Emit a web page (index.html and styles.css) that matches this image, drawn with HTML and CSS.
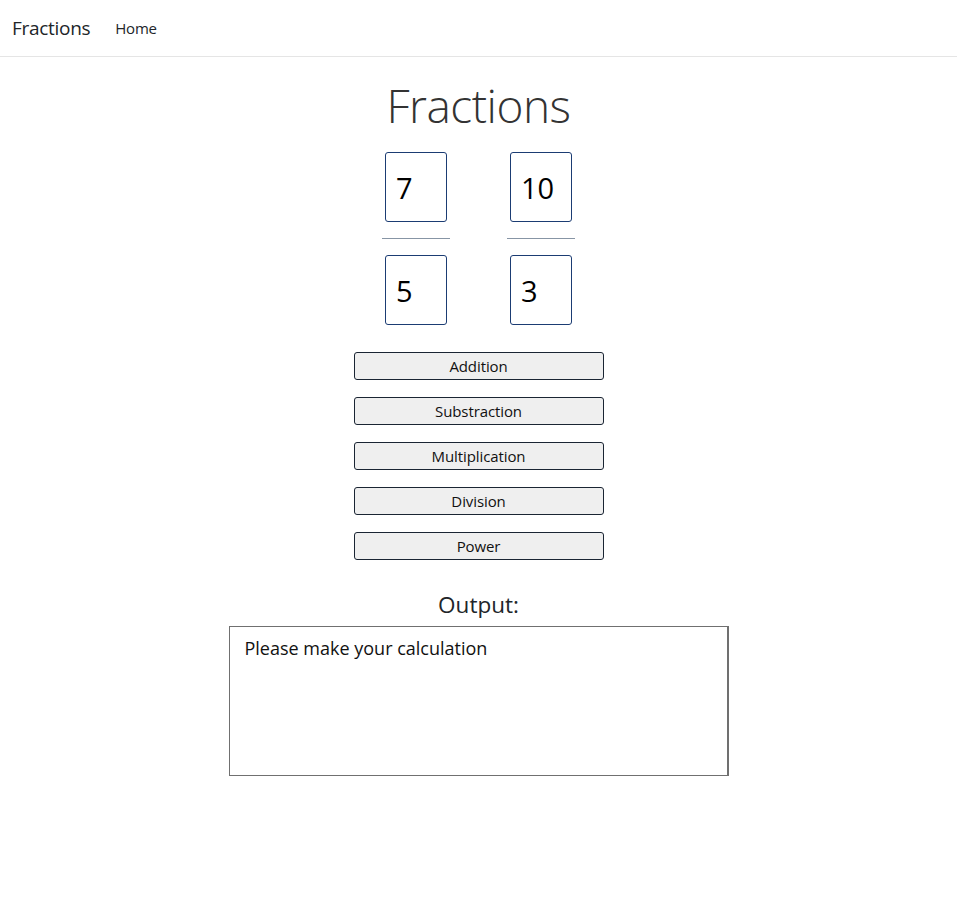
FILE: index.html
```html
<!DOCTYPE html>
<html>
<head>
<meta charset="utf-8">
<title>Fractions</title>
<link rel="stylesheet" href="styles.css">
</head>
<body>
<header class="navbar">
  <span class="brand">Fractions</span>
  <a class="nav-link" href="#">Home</a>
</header>
<main class="main">
  <h1 class="title">Fractions</h1>
  <div class="fractions">
    <div class="fraction">
      <div class="num-box">7</div>
      <div class="bar"></div>
      <div class="num-box">5</div>
    </div>
    <div class="fraction">
      <div class="num-box">10</div>
      <div class="bar"></div>
      <div class="num-box">3</div>
    </div>
  </div>
  <div class="ops">
    <button class="op">Addition</button>
    <button class="op">Substraction</button>
    <button class="op">Multiplication</button>
    <button class="op">Division</button>
    <button class="op">Power</button>
  </div>
  <h2 class="output-label">Output:</h2>
  <div class="output">Please make your calculation</div>
</main>
</body>
</html>
```
FILE: styles.css
```css
* { box-sizing: border-box; }
body {
  margin: 0;
  font-family: "Open Sans", "Noto Sans", sans-serif;
  color: #212529;
  background: #fff;
}
.navbar {
  height: 57px;
  border-bottom: 1px solid #e5e5e5;
  display: flex;
  align-items: center;
  padding: 0 12px;
  gap: 25px;
}
.brand {
  font-size: 19px;
  color: #212529;
  letter-spacing: -0.3px;
}
.nav-link {
  font-size: 15px;
  color: #212529;
  text-decoration: none;
  letter-spacing: -0.2px;
}
.main {
  display: flex;
  flex-direction: column;
  align-items: center;
  padding-top: 20px;
}
.title {
  margin: 0;
  font-weight: 300;
  font-size: 46px;
  line-height: 56px;
  color: #333;
  letter-spacing: -0.5px;
}
.fractions {
  display: flex;
  gap: 57px;
  margin-top: 19px;
}
.fraction {
  width: 68px;
  display: flex;
  flex-direction: column;
  align-items: center;
}
.num-box {
  width: 62px;
  height: 70px;
  border: 1px solid #1b3c73;
  border-radius: 3px;
  font-size: 29px;
  line-height: 70px;
  padding-left: 10px;
  color: #000;
}
.bar {
  width: 68px;
  height: 1px;
  background: #8795a5;
  margin: 16px 0 16px;
}
.ops {
  display: flex;
  flex-direction: column;
  gap: 17px;
  margin-top: 27px;
}
.op {
  width: 250px;
  height: 28px;
  border: 1px solid #1a2533;
  border-radius: 3px;
  background: #efefef;
  font-family: "Open Sans", "Noto Sans", sans-serif;
  font-size: 15px;
  color: #111;
  padding: 0;
  letter-spacing: -0.1px;
}
.output-label {
  margin: 30px 0 0;
  font-weight: 400;
  font-size: 22.5px;
  line-height: 30px;
  color: #212529;
}
.output {
  width: 500px;
  height: 150px;
  margin-top: 6px;
  border: 1px solid #707070;
  border-right-width: 2px;
  padding: 8px 15px;
  font-size: 18px;
  line-height: 26px;
  color: #111;
  letter-spacing: 0;
}
```
